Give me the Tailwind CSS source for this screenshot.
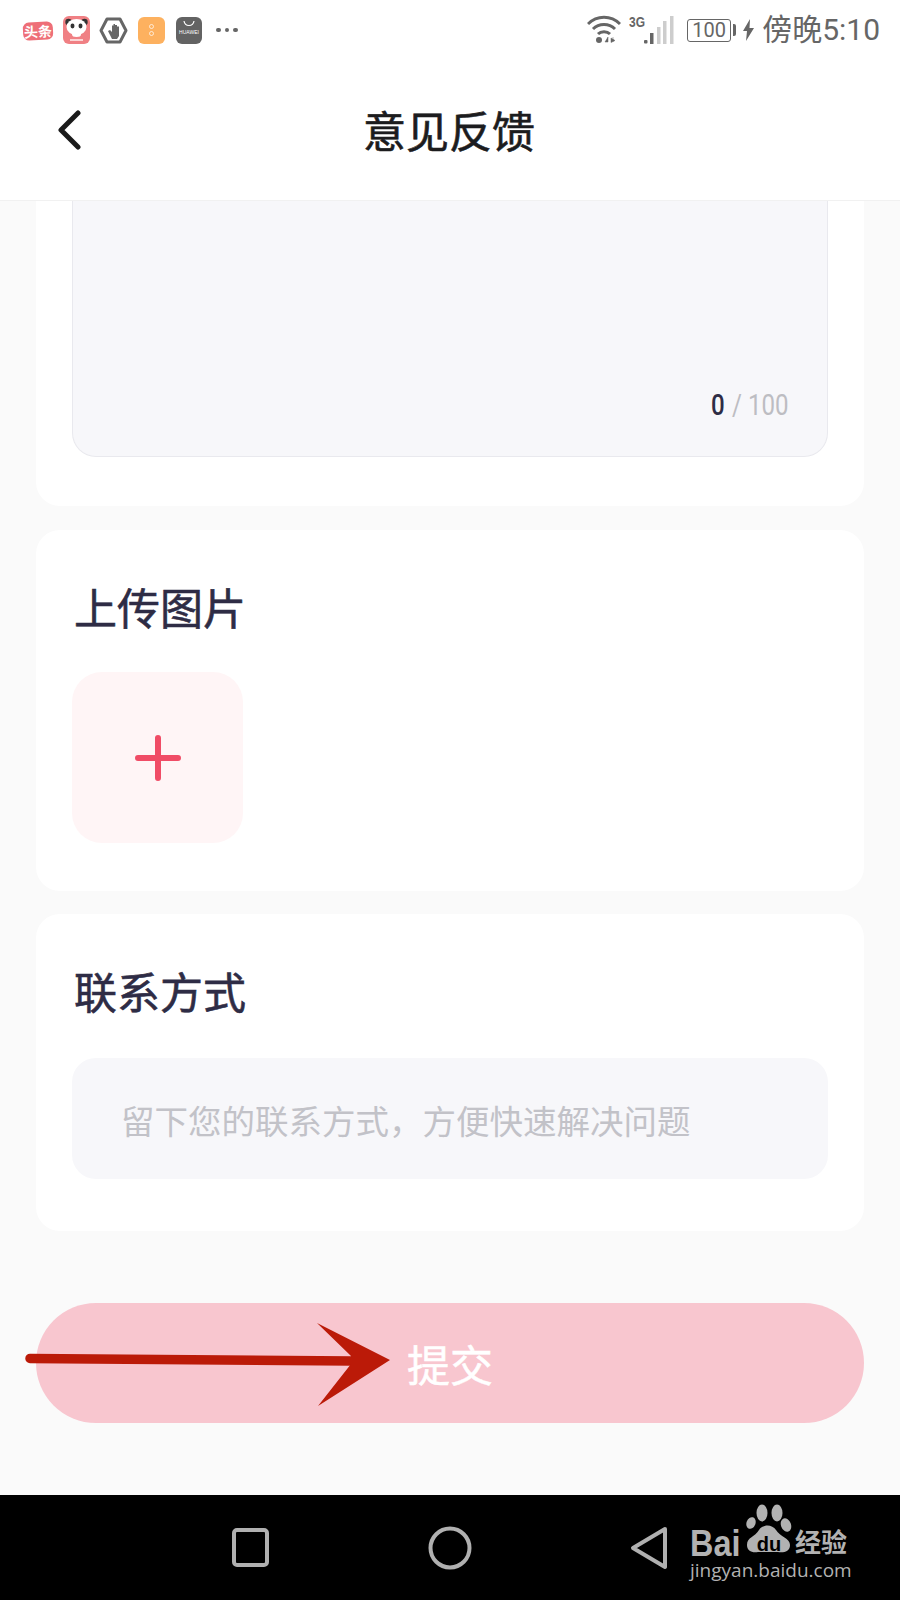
<!DOCTYPE html>
<html lang="zh-CN">
<head>
  <meta charset="UTF-8" />
  <meta name="viewport" content="width=device-width, initial-scale=1.0" />
  <title>意见反馈</title>
  <script src="https://cdn.jsdelivr.net/npm/@tailwindcss/browser@4"></script>
</head>
<body class="bg-[#fafafa] font-['Noto_Sans_CJK_SC',sans-serif]">
  <div class="relative w-[900px] h-[1600px] flex flex-col overflow-hidden">

    <!-- Status bar -->
    <div class="h-[60px] bg-white flex items-center pl-[23px] pr-[20px] shrink-0">
      <div class="w-[30px] h-[18px] mt-[1px] rounded-[6px] bg-[#ee6f78] -rotate-3 flex items-center justify-center text-white text-[14px] font-bold leading-none">头条</div>
      <svg class="ml-[10px]" width="27" height="28" viewBox="0 0 27 28">
        <rect width="27" height="28" rx="6" fill="#f08084"/>
        <circle cx="5.500" cy="6" r="3.200" fill="#333"/><circle cx="21.500" cy="6" r="3.200" fill="#333"/>
        <ellipse cx="13.500" cy="11" rx="10" ry="8" fill="#fff"/>
        <ellipse cx="9.500" cy="10" rx="2" ry="2.400" fill="#333"/><ellipse cx="17.500" cy="10" rx="2" ry="2.400" fill="#333"/>
        <ellipse cx="13.500" cy="18.500" rx="4.500" ry="2.500" fill="#fff"/>
        <rect x="7" y="23" width="13" height="2" fill="#fbd5d5"/>
      </svg>
      <svg class="ml-[9px]" width="29" height="27" viewBox="0 0 29 27">
        <path d="M8 2h13l6 11.500L21 25H8L2 13.500z" fill="none" stroke="#666" stroke-width="3" stroke-linejoin="round"/>
        <path d="M9 14l2-1 2 2V8.500h1.500V7H16v1h2v1.500h2V19l-2 3h-5z" fill="#666"/>
      </svg>
      <div class="ml-[10px] w-[27px] h-[27px] rounded-[6px] bg-[#fdb15f] flex flex-col items-center justify-center gap-[2px]">
        <span class="w-[5px] h-[5px] rounded-full border border-white/70"></span>
        <span class="w-[5px] h-[5px] rounded-full border border-white/70"></span>
      </div>
      <div class="ml-[11px] w-[26px] h-[27px] rounded-[6px] bg-[#636363] flex flex-col items-center overflow-hidden">
        <svg class="mt-[3px]" width="12" height="7" viewBox="0 0 12 7"><path d="M1 1c1 6 9 6 10 0" fill="none" stroke="#fff" stroke-width="1.200"/></svg>
        <span class="mt-[3px] text-[5px] leading-none text-white font-['Liberation_Sans',sans-serif]">HUAWEI</span>
      </div>
      <div class="ml-[14px] flex gap-[4px]">
        <span class="w-[4.500px] h-[4.500px] rounded-full bg-[#666]"></span>
        <span class="w-[4.500px] h-[4.500px] rounded-full bg-[#666]"></span>
        <span class="w-[4.500px] h-[4.500px] rounded-full bg-[#666]"></span>
      </div>

      <div class="ml-auto flex items-center">
        <svg width="34" height="30" viewBox="0 0 34 30">
          <path d="M1 9c9-9 23-9 32 0M6 14c6-6 16-6 22 0M11 19c3-3 9-3 12 0" fill="none" stroke="#666" stroke-width="3"/>
          <circle cx="12" cy="25" r="3" fill="#666"/>
          <path d="M21 22l-3 5h3zM26 27v-5M24 23l4 2.500-4 2z" fill="#666" stroke="#666" stroke-width="0.500"/>
        </svg>
        <div class="relative w-[45px] h-[30px] ml-[8px]">
          <span class="absolute left-0 -top-[1px] text-[15px] leading-none font-bold text-[#666] font-['Liberation_Sans',sans-serif] scale-x-[0.8] origin-left">3G</span>
          <svg class="absolute left-[14px] top-0" width="31" height="30" viewBox="0 0 31 30">
            <rect x="1" y="25" width="3.500" height="3.500" rx="1" fill="#666"/>
            <rect x="7" y="18" width="3.500" height="11" fill="#666"/>
            <rect x="14" y="12" width="3.500" height="17" fill="#cdcdcd"/>
            <rect x="20" y="6" width="3.500" height="23" fill="#cdcdcd"/>
            <rect x="27" y="1" width="3.500" height="28" fill="#cdcdcd"/>
          </svg>
        </div>
        <div class="ml-[13px] w-[44px] h-[23px] rounded-[3px] border-[1.500px] border-[#666] flex items-center justify-center text-[20px] leading-none text-[#666] font-['Roboto',sans-serif]">100</div>
        <span class="ml-[2px] w-[3px] h-[12px] rounded-r-[2px] bg-[#666]"></span>
        <svg class="ml-[7px]" width="11" height="22" viewBox="0 0 11 22"><path d="M7 0L0 12h4l-1 10 8-13H6.500z" fill="#666"/></svg>
        <span class="ml-[8px] text-[30px] leading-none text-[#666] font-['Roboto','Noto_Sans_CJK_SC',sans-serif]">傍晚5:10</span>
      </div>
    </div>

    <!-- Header -->
    <div class="relative h-[141px] bg-white border-b border-[#f1f1f1] flex items-center justify-center shrink-0">
      <svg class="absolute left-[55px] top-[50px]" width="28" height="40" viewBox="0 0 28 40"><path d="M23 3L6 20l17 17" fill="none" stroke="#1a1a1a" stroke-width="5" stroke-linecap="round" stroke-linejoin="round"/></svg>
      <h1 class="text-[43px] leading-none font-normal [-webkit-text-stroke:0.6px] text-[#1c1c1e] -mt-[2px] pr-[2px]">意见反馈</h1>
    </div>

    <!-- Content -->
    <div class="flex-1 px-[36px] flex flex-col">
      <div class="h-[305px] bg-white rounded-b-[24px] px-[36px] shrink-0">
        <div class="h-[256px] bg-[#f7f7fa] border-x border-b border-[#e9e9ee] rounded-b-[24px] flex items-end justify-end pr-[38px] pb-[36px]">
          <div class="flex items-baseline text-[29px] leading-none font-['Roboto',sans-serif] scale-x-[0.83] origin-right">
            <span class="font-medium text-[#2e2c45]">0</span>
            <span class="text-[#bdbdc2] ml-[9px]">/ 100</span>
          </div>
        </div>
      </div>

      <div class="h-[361px] mt-[24px] bg-white rounded-[24px] px-[36px] pt-[46px] shrink-0">
        <h2 class="text-[43px] leading-[60px] font-normal [-webkit-text-stroke:0.6px] text-[#2e2c45] pl-[2px]">上传图片</h2>
        <div class="mt-[36px] w-[171px] h-[171px] rounded-[30px] bg-[#fff5f6] flex items-center justify-center">
          <svg width="46" height="46" viewBox="0 0 46 46"><path d="M23 3v40M3 23h40" stroke="#f04c66" stroke-width="6" stroke-linecap="round"/></svg>
        </div>
      </div>

      <div class="h-[317px] mt-[23px] bg-white rounded-[24px] px-[36px] pt-[46px] shrink-0">
        <h2 class="text-[43px] leading-[60px] font-normal [-webkit-text-stroke:0.6px] text-[#2e2c45] pl-[2px]">联系方式</h2>
        <div class="mt-[38px] h-[121px] rounded-[24px] bg-[#f7f7fa] flex items-center pl-[49px] pt-[4px] text-[33.500px] text-[#c2c2c8]">留下您的联系方式&#65292;方便快速解决问题</div>
      </div>

      <button class="mt-[72px] h-[120px] rounded-full bg-[#f8c6cf] text-white text-[43px] [-webkit-text-stroke:0.5px] flex items-center justify-center shrink-0">提交</button>
    </div>

    <!-- Nav bar -->
    <div class="h-[105px] bg-black flex items-center pl-[232px] shrink-0">
      <svg width="37" height="39" viewBox="0 0 37 39"><rect x="2" y="2" width="33" height="35" rx="3" fill="none" stroke="#b0b0b0" stroke-width="4"/></svg>
      <svg class="ml-[159px]" width="44" height="44" viewBox="0 0 44 44"><circle cx="22" cy="22" r="19.500" fill="none" stroke="#b0b0b0" stroke-width="4"/></svg>
      <svg class="ml-[158px]" width="38" height="44" viewBox="0 0 38 44"><path d="M35 3L3 22l32 19z" fill="none" stroke="#b0b0b0" stroke-width="4" stroke-linejoin="round"/></svg>
    </div>

    <!-- Annotation arrow -->
    <svg class="absolute left-0 top-[1310px]" width="420" height="100" viewBox="0 0 420 100">
      <path d="M30 48.500L352 51" stroke="#bb1a08" stroke-width="9.500" stroke-linecap="round"/>
      <path d="M317 14L390 51 318 97 351 55V47z" fill="#bb1a08" transform="translate(0 -1)"/>
    </svg>

    <!-- Watermark -->
    <div class="absolute left-[690px] top-[1503px] w-[170px] h-[84px] text-[#b2b2b2]">
      <span class="absolute left-0 top-[27px] text-[36px] leading-[28px] font-bold font-['Liberation_Sans',sans-serif] scale-x-90 origin-left">Bai</span>
      <svg class="absolute left-[54px] top-0" width="52" height="52" viewBox="0 0 52 52">
        <ellipse cx="18" cy="10" rx="5.500" ry="8.500" fill="#b2b2b2"/>
        <ellipse cx="33" cy="10" rx="5.500" ry="8.500" fill="#b2b2b2"/>
        <ellipse cx="42" cy="22" rx="5" ry="7" transform="rotate(-20 42 22)" fill="#b2b2b2"/>
        <ellipse cx="7" cy="20" rx="4.500" ry="6" transform="rotate(20 7 20)" fill="#b2b2b2"/>
        <path d="M3 42c0-8 8-8 12-15 4-6 13-6 17 0 4 7 14 8 14 15 0 7-7 8-12 7H14C8 50 3 48 3 42z" fill="#b2b2b2"/>
      </svg>
      <span class="absolute left-[60px] top-[31px] w-[38px] text-center text-[20px] leading-none font-bold text-black font-['Liberation_Sans',sans-serif]">du</span>
      <span class="absolute left-[105px] top-[25px] text-[26px] leading-none font-bold">经验</span>
      <span class="absolute left-0 top-[58px] text-[19px] leading-none font-['Open_Sans',sans-serif] whitespace-nowrap">jingyan.baidu.com</span>
    </div>
  </div>
</body>
</html>
